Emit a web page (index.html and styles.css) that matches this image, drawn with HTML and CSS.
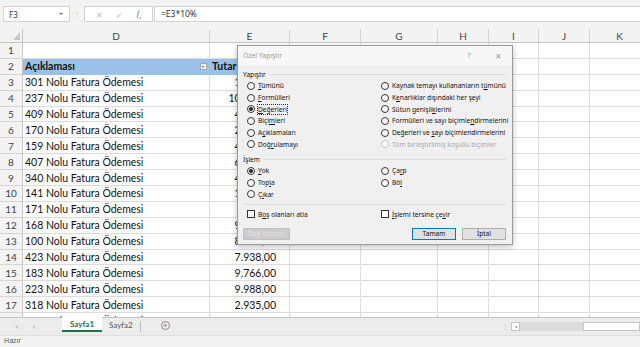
FILE: index.html
```html
<!DOCTYPE html>
<html>
<head>
	<title>Sayfa1 - Excel</title>
	<meta charset="utf-8">
	<link rel="stylesheet" href="styles.css">
</head>
<body>
	<div class="app">
		<div class="formula-bar">
			<div class="name-box"><span>F3</span><span class="caret"></span></div>
			<div class="grip">⋮</div>
			<div class="fx-buttons"><span>✕</span><span>✓</span><span class="fx">f<sub>x</sub></span></div>
			<div class="formula-input">=E3*10%</div>
		</div>

		<div class="sheet">
			<div class="grid">
				<div class="row">
					<div class="corner"><span class="corner-tri"></span></div>
					<div class="ch">D</div><div class="ch">E</div><div class="ch">F</div><div class="ch">G</div>
					<div class="ch">H</div><div class="ch">I</div><div class="ch">J</div><div class="ch">K</div>
				</div>
				<div class="row">
					<div class="rh">1</div><div class="c"></div><div class="c"></div><div class="c"></div><div class="c"></div>
					<div class="c"></div><div class="c"></div><div class="c"></div><div class="c"></div>
				</div>
				<div class="row">
					<div class="rh">2</div>
					<div class="c th">Açıklaması<span class="filter"></span></div>
					<div class="c th">Tutar</div>
					<div class="c"></div><div class="c"></div><div class="c"></div><div class="c"></div><div class="c"></div><div class="c"></div>
				</div>
				<div class="row">
					<div class="rh">3</div><div class="c">301 Nolu Fatura Ödemesi</div><div class="c num">1.250,00</div>
					<div class="c"></div><div class="c"></div><div class="c"></div><div class="c"></div><div class="c"></div><div class="c"></div>
				</div>
				<div class="row">
					<div class="rh">4</div><div class="c">237 Nolu Fatura Ödemesi</div><div class="c num">10.450,00</div>
					<div class="c"></div><div class="c"></div><div class="c"></div><div class="c"></div><div class="c"></div><div class="c"></div>
				</div>
				<div class="row">
					<div class="rh">5</div><div class="c">409 Nolu Fatura Ödemesi</div><div class="c num">4.320,00</div>
					<div class="c"></div><div class="c"></div><div class="c"></div><div class="c"></div><div class="c"></div><div class="c"></div>
				</div>
				<div class="row">
					<div class="rh">6</div><div class="c">170 Nolu Fatura Ödemesi</div><div class="c num">2.870,00</div>
					<div class="c"></div><div class="c"></div><div class="c"></div><div class="c"></div><div class="c"></div><div class="c"></div>
				</div>
				<div class="row">
					<div class="rh">7</div><div class="c">159 Nolu Fatura Ödemesi</div><div class="c num">4.115,00</div>
					<div class="c"></div><div class="c"></div><div class="c"></div><div class="c"></div><div class="c"></div><div class="c"></div>
				</div>
				<div class="row">
					<div class="rh">8</div><div class="c">407 Nolu Fatura Ödemesi</div><div class="c num">6.540,00</div>
					<div class="c"></div><div class="c"></div><div class="c"></div><div class="c"></div><div class="c"></div><div class="c"></div>
				</div>
				<div class="row">
					<div class="rh">9</div><div class="c">340 Nolu Fatura Ödemesi</div><div class="c num">4.780,00</div>
					<div class="c"></div><div class="c"></div><div class="c"></div><div class="c"></div><div class="c"></div><div class="c"></div>
				</div>
				<div class="row">
					<div class="rh">10</div><div class="c">141 Nolu Fatura Ödemesi</div><div class="c num">1.960,00</div>
					<div class="c"></div><div class="c"></div><div class="c"></div><div class="c"></div><div class="c"></div><div class="c"></div>
				</div>
				<div class="row">
					<div class="rh">11</div><div class="c">171 Nolu Fatura Ödemesi</div><div class="c num">965,00</div>
					<div class="c"></div><div class="c"></div><div class="c"></div><div class="c"></div><div class="c"></div><div class="c"></div>
				</div>
				<div class="row">
					<div class="rh">12</div><div class="c">168 Nolu Fatura Ödemesi</div><div class="c num">9.412,00</div>
					<div class="c"></div><div class="c"></div><div class="c"></div><div class="c"></div><div class="c"></div><div class="c"></div>
				</div>
				<div class="row">
					<div class="rh">13</div><div class="c">100 Nolu Fatura Ödemesi</div><div class="c num">8.215,00</div>
					<div class="c"></div><div class="c"></div><div class="c"></div><div class="c"></div><div class="c"></div><div class="c"></div>
				</div>
				<div class="row">
					<div class="rh">14</div><div class="c">423 Nolu Fatura Ödemesi</div><div class="c num">7.938,00</div>
					<div class="c"></div><div class="c"></div><div class="c"></div><div class="c"></div><div class="c"></div><div class="c"></div>
				</div>
				<div class="row">
					<div class="rh">15</div><div class="c">183 Nolu Fatura Ödemesi</div><div class="c num">9.766,00</div>
					<div class="c"></div><div class="c"></div><div class="c"></div><div class="c"></div><div class="c"></div><div class="c"></div>
				</div>
				<div class="row">
					<div class="rh">16</div><div class="c">223 Nolu Fatura Ödemesi</div><div class="c num">9.988,00</div>
					<div class="c"></div><div class="c"></div><div class="c"></div><div class="c"></div><div class="c"></div><div class="c"></div>
				</div>
				<div class="row">
					<div class="rh">17</div><div class="c">318 Nolu Fatura Ödemesi</div><div class="c num">2.935,00</div>
					<div class="c"></div><div class="c"></div><div class="c"></div><div class="c"></div><div class="c"></div><div class="c"></div>
				</div>
				<div class="row">
					<div class="rh">18</div><div class="c">257 Nolu Fatura Ödemesi</div><div class="c num">3.040,00</div>
					<div class="c"></div><div class="c"></div><div class="c"></div><div class="c"></div><div class="c"></div><div class="c"></div>
				</div>
			</div>

			<!-- Özel Yapıştır dialog -->
			<div class="dialog">
				<div class="dlg-title">
					<span class="dlg-caption">Özel Yapıştır</span>
					<span class="dlg-help">?</span>
					<span class="dlg-close">✕</span>
				</div>
				<div class="group-label"><span>Yapıştır</span></div>
				<div class="options">
					<div class="opt"><span class="radio"></span><span><u>T</u>ümünü</span></div>
					<div class="opt"><span class="radio"></span><span>Kaynak temayı kullananların t<u>ü</u>münü</span></div>
					<div class="opt"><span class="radio"></span><span><u>F</u>ormülleri</span></div>
					<div class="opt"><span class="radio"></span><span>K<u>e</u>narlıklar dışındaki her şeyi</span></div>
					<div class="opt"><span class="radio checked"></span><span class="focus"><u>D</u>eğerleri</span></div>
					<div class="opt"><span class="radio"></span><span>Sütun genişli<u>k</u>lerini</span></div>
					<div class="opt"><span class="radio"></span><span>Biçi<u>m</u>leri</span></div>
					<div class="opt"><span class="radio"></span><span>Formülleri ve sayı biçimle<u>n</u>dirmelerini</span></div>
					<div class="opt"><span class="radio"></span><span>A<u>ç</u>ıklamaları</span></div>
					<div class="opt"><span class="radio"></span><span>Değerleri ve <u>s</u>ayı biçimlendirmelerini</span></div>
					<div class="opt"><span class="radio"></span><span>Doğ<u>r</u>ulamayı</span></div>
					<div class="opt disabled"><span class="radio"></span><span>Tüm birleştirilmiş koşullu biçimler</span></div>
				</div>
				<div class="group-label"><span>İşlem</span></div>
				<div class="options">
					<div class="opt"><span class="radio checked"></span><span><u>Y</u>ok</span></div>
					<div class="opt"><span class="radio"></span><span>Ça<u>r</u>p</span></div>
					<div class="opt"><span class="radio"></span><span>Top<u>l</u>a</span></div>
					<div class="opt"><span class="radio"></span><span>Bö<u>l</u></span></div>
					<div class="opt"><span class="radio"></span><span>Ç<u>ı</u>kar</span></div>
				</div>
				<div class="separator"></div>
				<div class="options checks">
					<div class="opt"><span class="check"></span><span>B<u>o</u>ş olanları atla</span></div>
					<div class="opt"><span class="check"></span><span><u>İ</u>şlemi tersine çe<u>v</u>ir</span></div>
				</div>
				<div class="dlg-buttons">
					<button class="btn" disabled>Bağ Yapıştır</button>
					<span class="btn-space"></span>
					<button class="btn primary">Tamam</button>
					<button class="btn">İptal</button>
				</div>
			</div>
		</div>

		<div class="tabs">
			<div class="tab-nav"><span class="tri-left"></span><span class="tri-right"></span></div>
			<div class="tab active">Sayfa1</div>
			<div class="tab">Sayfa2</div>
			<div class="tab-sep"></div>
			<div class="tab-add">+</div>
			<div class="tab-fill"></div>
			<div class="split-grip">⋮</div>
			<div class="hscroll">
				<span class="hs-btn"><span class="tri-small"></span></span>
				<span class="hs-thumb"></span>
				<span class="hs-track"></span>
			</div>
		</div>

		<div class="status">Hazır</div>
	</div>
</body>
</html>
```

FILE: styles.css
```css
body {
	margin: 0;
	background-color: #fff;
	font-family: 'Lato', 'Liberation Sans', sans-serif;
	color: #222;
}

.app {
	width: 640px;
	height: 347px;
	overflow: hidden;
	display: flex;
	flex-direction: column;
}

/* formula bar */
.formula-bar {
	height: 29px;
	flex: none;
	box-sizing: border-box;
	padding: 6px 0 0 3px;
	background-color: #f3f3f3;
	display: flex;
	align-items: flex-start;
	font-family: 'Noto Sans', sans-serif;
	font-size: 8px;
	color: #333;
}

.name-box {
	width: 67px;
	height: 16px;
	box-sizing: border-box;
	border: 1px solid #d2d2d2;
	background-color: #fff;
	display: flex;
	align-items: center;
	justify-content: space-between;
	padding: 0 6px 0 5px;
}

.caret {
	width: 0;
	height: 0;
	border-left: 2px solid transparent;
	border-right: 2px solid transparent;
	border-top: 2px solid #777;
}

.grip {
	width: 14px;
	text-align: center;
	color: #bbb;
	line-height: 16px;
}

.fx-buttons {
	width: 69px;
	height: 16px;
	box-sizing: border-box;
	border: 1px solid #d2d2d2;
	background-color: #fff;
	display: flex;
	align-items: center;
	justify-content: space-around;
	padding: 0 4px;
	color: #bbb;
	font-size: 8px;
}

.fx-buttons .fx {
	color: #666;
	font-style: italic;
	font-family: 'Liberation Serif', serif;
}

.fx sub {
	font-size: 5px;
}

.formula-input {
	flex: 1;
	height: 16px;
	box-sizing: border-box;
	border: 1px solid #d2d2d2;
	border-right: none;
	background-color: #fff;
	margin-left: 1px;
	padding-left: 6px;
	line-height: 14px;
	font-size: 8.5px;
}

/* sheet grid */
.sheet {
	position: relative;
	flex: 1;
	overflow: hidden;
}

.grid {
	display: grid;
	grid-template-columns: 23px 187px 80px 71px 77px 51px 50px 51px 60px;
	grid-template-rows: 14px;
	grid-auto-rows: 15.9px;
	font-size: 10.5px;
}

.row {
	display: contents;
}

.c, .ch, .rh, .corner {
	box-sizing: border-box;
	border-right: 1px solid #dcdcdc;
	border-bottom: 1px solid #dcdcdc;
	white-space: nowrap;
	overflow: hidden;
	display: flex;
	align-items: center;
}

.c {
	padding: 0 2px;
	color: #111;
}

.c.num {
	justify-content: flex-end;
	padding-right: 13px;
}

.c.th {
	background-color: #9bc2e6;
	border-color: #9bc2e6;
	font-weight: bold;
	position: relative;
}

.filter {
	position: absolute;
	right: 2px;
	top: 4px;
	width: 7px;
	height: 7px;
	box-sizing: border-box;
	background-color: #f4f4f4;
	border: 1px solid #a9a9a9;
}

.filter::after {
	content: '';
	position: absolute;
	left: 1px;
	top: 2px;
	border-left: 1.5px solid transparent;
	border-right: 1.5px solid transparent;
	border-top: 2px solid #555;
}

.ch, .rh, .corner {
	background-color: #f3f3f3;
	color: #444;
	justify-content: center;
	border-color: #d4d4d4;
}

.ch {
	border-bottom-color: #c6c6c6;
	font-size: 10px;
}

.rh {
	border-right-color: #c6c6c6;
	font-size: 10px;
}

.corner {
	border-right-color: #c6c6c6;
	border-bottom-color: #c6c6c6;
	justify-content: flex-end;
	align-items: flex-end;
	padding: 0 2px 2px 0;
}

.corner-tri {
	width: 0;
	height: 0;
	border-left: 7px solid transparent;
	border-bottom: 8px solid #c8c8c8;
}

/* dialog */
.dialog {
	position: absolute;
	left: 237px;
	top: 16px;
	width: 276px;
	height: 200px;
	box-sizing: border-box;
	background-color: #f0f0f0;
	border: 1px solid #9a9a9a;
	box-shadow: 0 2px 6px rgba(0, 0, 0, 0.25);
	font-family: 'Noto Sans', sans-serif;
	font-size: 6.6px;
	color: #111;
	padding: 0 6px 0 5px;
	display: flex;
	flex-direction: column;
}

.dlg-title {
	height: 19px;
	margin: 0 -6px 0 -5px;
	padding: 0 0 0 5px;
	background-color: #f7f7f7;
	display: flex;
	align-items: center;
	color: #9a9a9a;
	font-size: 6.8px;
}

.dlg-caption {
	flex: 1;
}

.dlg-help {
	width: 30px;
	text-align: center;
	font-size: 7px;
}

.dlg-close {
	width: 28px;
	text-align: center;
	font-size: 8px;
}

.group-label {
	height: 12px;
	margin-top: 3px;
	display: flex;
	align-items: center;
	gap: 3px;
}

.group-label::after {
	content: '';
	flex: 1;
	border-top: 1px solid #dcdcdc;
}

.options {
	display: grid;
	grid-template-columns: 134px 1fr;
	grid-auto-rows: 11.7px;
	padding-left: 4px;
}

.opt {
	display: flex;
	align-items: center;
	gap: 3px;
	white-space: nowrap;
}

.opt u {
	text-decoration-thickness: 0.5px;
	text-underline-offset: 1px;
}

.opt.disabled {
	color: #a8a8a8;
}

.radio {
	width: 8px;
	height: 8px;
	box-sizing: border-box;
	border: 1px solid #333;
	border-radius: 50%;
	background-color: #fff;
	display: flex;
	align-items: center;
	justify-content: center;
	flex: none;
}

.radio.checked::after {
	content: '';
	width: 4px;
	height: 4px;
	border-radius: 50%;
	background-color: #222;
}

.opt.disabled .radio {
	border-color: #c4c4c4;
}

.focus {
	outline: 1px dotted #333;
	outline-offset: 0;
}

.check {
	width: 8px;
	height: 8px;
	box-sizing: border-box;
	border: 1px solid #333;
	background-color: #fff;
	flex: none;
}

.separator {
	margin-top: 4px;
	border-top: 1px solid #dcdcdc;
}

.checks {
	margin-top: 3px;
}

.dlg-buttons {
	margin-top: 8px;
	display: flex;
	gap: 6px;
}

.btn-space {
	flex: 1;
}

.btn {
	width: 44px;
	height: 12px;
	padding: 0;
	box-sizing: border-box;
	font-family: 'Noto Sans', sans-serif;
	font-size: 6.6px;
	color: #111;
	background-color: #e1e1e1;
	border: 1px solid #adadad;
}

.btn:disabled {
	width: 47px;
	background-color: #cccccc;
	border-color: #bfbfbf;
	color: #e2e2e2;
}

.btn.primary {
	border: 1px solid #0078d7;
}

/* sheet tabs */
.tabs {
	height: 18px;
	flex: none;
	box-sizing: border-box;
	border-top: 1px solid #c6c6c6;
	background-color: #ececec;
	display: flex;
	align-items: stretch;
	font-size: 8px;
	color: #555;
}

.tab-nav {
	width: 60px;
	display: flex;
	align-items: center;
	gap: 15px;
	padding-left: 15px;
	box-sizing: border-box;
}

.tri-left {
	border-top: 2.5px solid transparent;
	border-bottom: 2.5px solid transparent;
	border-right: 3px solid #c6c6c6;
}

.tri-right {
	border-top: 2.5px solid transparent;
	border-bottom: 2.5px solid transparent;
	border-left: 3px solid #c6c6c6;
}

.tab {
	padding: 0 7px;
	display: flex;
	align-items: center;
	margin-top: -1px;
	height: 15px;
}

.tab.active {
	width: 40px;
	box-sizing: border-box;
	justify-content: center;
	background-color: #fff;
	color: #217346;
	font-weight: bold;
	border-bottom: 2px solid #217346;
	margin-left: 2px;
}

.tab-sep {
	width: 1px;
	margin: 3px 0 3px 0;
	background-color: #bdbdbd;
}

.tab-add {
	width: 9px;
	height: 9px;
	margin: 3px 0 0 20px;
	border: 1px solid #8a8a8a;
	border-radius: 50%;
	box-sizing: border-box;
	color: #666;
	font-size: 8px;
	line-height: 7px;
	text-align: center;
}

.tab-fill {
	flex: 1;
}

.split-grip {
	color: #c0c0c0;
	width: 10px;
	line-height: 16px;
}

.hscroll {
	width: 129px;
	height: 9px;
	margin-top: 4px;
	display: flex;
}

.hs-btn {
	width: 9px;
	box-sizing: border-box;
	border: 1px solid #c6c6c6;
	background-color: #fff;
	display: flex;
	align-items: center;
	justify-content: center;
}

.tri-small {
	border-top: 1.5px solid transparent;
	border-bottom: 1.5px solid transparent;
	border-right: 2px solid #777;
}

.hs-thumb {
	width: 63px;
	background-color: #dcdcdc;
}

.hs-track {
	flex: 1;
	box-sizing: border-box;
	border: 1px solid #c6c6c6;
	background-color: #fff;
}

.status {
	height: 11px;
	flex: none;
	background-color: #f3f3f3;
	border-top: 1px solid #dedede;
	font-family: 'Noto Sans', sans-serif;
	font-size: 7px;
	color: #555;
	padding-left: 4px;
	line-height: 10px;
}
```
